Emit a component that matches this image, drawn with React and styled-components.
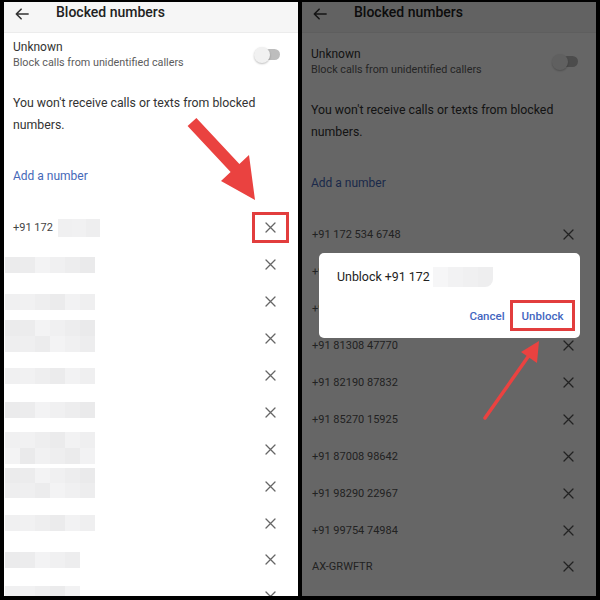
import React from 'react';
import styled, { createGlobalStyle } from 'styled-components';

const GlobalStyle = createGlobalStyle`
  html, body { margin: 0; padding: 0; background: #000; }
  body { font-family: Roboto, "Noto Sans", Arial, sans-serif; }
`;

// the two phone screenshots side by side on black
const Frame = styled.div`
  position: relative;
  width: 600px;
  height: 600px;
  box-sizing: border-box;
  padding: 2px 4px 4px;
  display: flex;
  gap: 4px;
  background: #000;
  overflow: hidden;
`;

const Screen = styled.div`
  position: relative;
  flex: 1;
  display: flex;
  flex-direction: column;
  background: #fff;
  overflow: hidden;
`;

const TopBar = styled.div`
  flex: none;
  height: 30px;
  display: flex;
  align-items: flex-start;
  gap: 27px;
  padding-left: 11px;
  background: #f6f6f6;
  border-bottom: 1px solid #ececec;
`;

const BackIcon = styled.svg`
  margin-top: 5px;
`;

const Title = styled.div`
  font-size: 14px;
  line-height: 21px;
  font-weight: 500;
  color: #222;
`;

const SettingRow = styled.div`
  display: flex;
  align-items: center;
  justify-content: space-between;
  margin-top: ${p => p.$offset}px;
  padding: 0 18px 0 9px;
`;

const SettingName = styled.div`
  font-size: 12px;
  line-height: 15px;
  color: #333;
`;

const SettingHint = styled.div`
  font-size: 10.8px;
  line-height: 15px;
  color: #5c5c5c;
`;

const Switch = styled.div`
  position: relative;
  width: 26px;
  height: 16px;
  &::before {
    content: '';
    position: absolute;
    right: 0;
    top: 2.5px;
    width: 22px;
    height: 11px;
    border-radius: 6px;
    background: #bdbdbd;
  }
`;

const Thumb = styled.div`
  position: relative;
  width: 16px;
  height: 16px;
  border-radius: 50%;
  background: #f1f1f1;
  box-shadow: 0 1px 2px rgba(0, 0, 0, 0.25);
`;

const Notice = styled.p`
  margin: 22.5px 0 0;
  padding: 0 9px;
  font-size: 12.3px;
  line-height: 22px;
  color: #333;
`;

const AddLink = styled.div`
  margin-top: 30px;
  padding: 0 9px;
  font-size: 12px;
  line-height: 20px;
  color: #4568b8;
`;

const List = styled.div`
  margin-top: 23.5px;
  display: flex;
  flex-direction: column;
`;

const Row = styled.div`
  flex: none;
  height: 36.9px;
  display: flex;
  align-items: center;
  justify-content: space-between;
  padding: 0 9px 0 ${p => p.$inset}px;
`;

const Number = styled.div`
  display: flex;
  align-items: center;
  gap: 5px;
  font-size: 11px;
  color: ${p => (p.$dimmed ? '#555' : '#444')};
`;

const Mosaic = styled.div`
  display: grid;
  grid-template-columns: repeat(${p => p.$cols}, ${p => p.$cw}px);
  grid-auto-rows: ${p => p.$ch}px;
  margin-left: ${p => p.$shift || 0}px;
  margin-top: ${p => p.$lift || 0}px;
  border-bottom-right-radius: ${p => p.$round || 0}px;
  overflow: hidden;
`;

const Cell = styled.div`
  background: ${p => p.$shade};
`;

const RemoveButton = styled.div`
  width: 37px;
  height: 31px;
  box-sizing: border-box;
  display: flex;
  align-items: center;
  justify-content: center;
  border: 3px solid ${p => (p.$marked ? '#e23d3d' : 'transparent')};
`;

const Scrim = styled.div`
  position: absolute;
  inset: 0;
  background: rgba(0, 0, 0, 0.6);
`;

const Dialog = styled.div`
  position: absolute;
  left: 17px;
  top: 251px;
  width: 261px;
  height: 85px;
  box-sizing: border-box;
  padding: 14px 5px 0 18px;
  background: #fff;
  border-radius: 5px;
`;

const DialogTitle = styled.div`
  display: flex;
  align-items: center;
  gap: 3px;
  font-size: 12.4px;
  line-height: 20px;
  color: #222;
`;

const DialogActions = styled.div`
  margin-top: 13px;
  display: flex;
  justify-content: flex-end;
`;

const TextButton = styled.div`
  height: 31px;
  box-sizing: border-box;
  display: flex;
  align-items: center;
  justify-content: center;
  width: ${p => p.$w}px;
  border: 3px solid ${p => (p.$marked ? '#e23d3d' : 'transparent')};
  font-size: 11.5px;
  font-weight: 500;
  color: #4466bf;
`;

const Annotations = styled.svg`
  position: absolute;
  left: 0;
  top: 0;
  pointer-events: none;
`;

const shade = (i, j, k, base = 234, span = 10) => {
  const v = base + ((i * 7 + j * 13 + k * 5) % span);
  return `rgb(${v},${v},${v + 1})`;
};

const Blur = ({ cols, rows = 1, cw = 15, ch = 16, seed = 0, shift, lift, round, base, span }) => {
  const cells = [];
  for (let r = 0; r < rows; r++) {
    for (let c = 0; c < cols; c++) {
      const edge = c === 0 ? 8 : 0;
      cells.push(<Cell key={`${r}-${c}`} $shade={shade(c + edge, r, seed, base, span)} />);
    }
  }
  return (
    <Mosaic $cols={cols} $cw={cw} $ch={ch} $shift={shift} $lift={lift} $round={round}>
      {cells}
    </Mosaic>
  );
};

const Back = () => (
  <BackIcon width="14" height="14" viewBox="0 0 16 16" fill="none" stroke="#333" strokeWidth="1.8" strokeLinecap="round" strokeLinejoin="round">
    <path d="M15 8H1.5M7 2.5L1.5 8 7 13.5" />
  </BackIcon>
);

const Cross = ({ color = '#666' }) => (
  <svg width="11" height="11" viewBox="0 0 11 11" stroke={color} strokeWidth="1.3" strokeLinecap="round">
    <path d="M1 1l9 9M10 1L1 10" />
  </svg>
);

const BlockedScreen = ({ offset, inset, rows, dimmed, children }) => (
  <Screen>
    <TopBar>
      <Back />
      <Title>Blocked numbers</Title>
    </TopBar>
    <SettingRow $offset={offset}>
      <div>
        <SettingName>Unknown</SettingName>
        <SettingHint>Block calls from unidentified callers</SettingHint>
      </div>
      <Switch>
        <Thumb />
      </Switch>
    </SettingRow>
    <Notice>
      You won't receive calls or texts from blocked
      <br />
      numbers.
    </Notice>
    <AddLink>Add a number</AddLink>
    <List>
      {rows.map((row, i) => (
        <Row key={i} $inset={inset}>
          <Number $dimmed={dimmed}>
            {row.label}
            {row.blur && <Blur {...row.blur} seed={i} />}
          </Number>
          <RemoveButton $marked={row.marked}>
            <Cross color={dimmed ? '#555' : '#666'} />
          </RemoveButton>
        </Row>
      ))}
    </List>
    {children}
  </Screen>
);

const hiddenRows = [
  { label: '+91 172', blur: { cols: 3, cw: 14, ch: 18, lift: 1 }, marked: true },
  { blur: { cols: 6, shift: -8 } },
  { blur: { cols: 6, shift: -8 } },
  { blur: { cols: 6, rows: 2, shift: -8, lift: -6 } },
  { blur: { cols: 6, shift: -8 } },
  { blur: { cols: 6, shift: -8, lift: -4 } },
  { blur: { cols: 6, rows: 2, shift: -8, lift: -3 } },
  { blur: { cols: 6, rows: 2, ch: 15, shift: -8, lift: -7 } },
  { blur: { cols: 6, shift: -8 } },
  { blur: { cols: 5, shift: -8 } },
  { blur: { cols: 5, shift: -8, lift: -6 } },
];

// rows two and three sit under the dialog: only their "+" shows
const shownRows = [
  '+91 172 534 6748',
  '+9',
  '+9',
  '+91 81308 47770',
  '+91 82190 87832',
  '+91 85270 15925',
  '+91 87008 98642',
  '+91 98290 22967',
  '+91 99754 74984',
  'AX-GRWFTR',
].map(label => ({ label }));

export default function App() {
  return (
    <>
      <GlobalStyle />
      <Frame>
        <BlockedScreen offset={6.5} inset={9} rows={hiddenRows} />
        <BlockedScreen offset={13.5} inset={10} rows={shownRows} dimmed>
          <Scrim />
          <Dialog>
            <DialogTitle>
              Unblock +91 172
              <Blur cols={4} cw={15} ch={20} round={8} base={238} span={9} seed={3} />
            </DialogTitle>
            <DialogActions>
              <TextButton $w={46}>Cancel</TextButton>
              <TextButton $w={65} $marked>Unblock</TextButton>
            </DialogActions>
          </Dialog>
        </BlockedScreen>
        <Annotations width="600" height="600" viewBox="0 0 600 600">
          <polygon
            fill="#ea4240"
            points="196.4,117.9 239.4,163.9 249,155 255,200 221,181 230.6,172.1 187.6,126.1"
          />
          <line x1="485" y1="418" x2="530" y2="354" stroke="#ea4240" strokeWidth="3.5" strokeLinecap="round" />
          <polygon fill="#ea4240" points="539,341 521,352 537,363" />
        </Annotations>
      </Frame>
    </>
  );
}
